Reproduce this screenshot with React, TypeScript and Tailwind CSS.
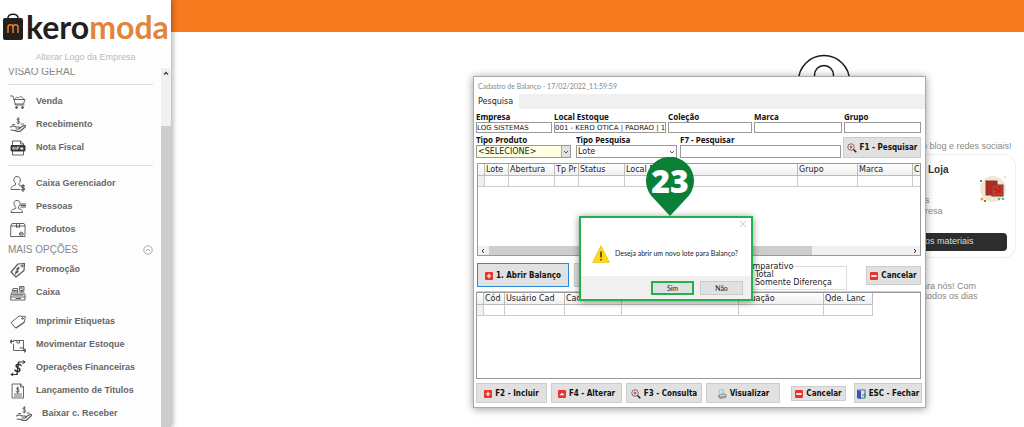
import type { ReactNode } from "react";

function Glyph({ children, className = "h-4 w-4" }: { children: ReactNode; className?: string }) {
  return (
    <svg viewBox="0 0 32 32" className={className} fill="none" stroke="#555" strokeWidth="1.8" strokeLinecap="round" strokeLinejoin="round" aria-hidden="true">
      {children}
    </svg>
  );
}

const hand = (
  <>
    <path d="M19 4c-1.500-1.500-5-1-5 1.200S19 7 19 10s-4 3.500-5.500 1.500M16.500 1v13" />
    <path d="M1 20c4-3 7-3 11 0h6c3 0 3 4 0 4h-6M19 22l9-5c3-1 4 1 2 3l-9 8c-2 1.500-8 1-11-1l-8-1" strokeWidth="2.200" />
    <path d="M5 15h4M22 14h5" />
  </>
);

const icons: Record<string, ReactNode> = {
  cart: (
    <>
      <path d="M1 4h5l5 18h17M8 11h22l-3 9H10" />
      <path d="M10 10l3-4 4 2 3-3 4 1 3 4" strokeWidth="1.500" />
      <circle cx="13" cy="27" r="2" fill="#555" />
      <circle cx="25" cy="27" r="2" fill="#555" />
    </>
  ),
  hand,
  nfe: (
    <>
      <path d="M5 10V2h16l6 6v2M5 23v7h22v-7M21 2v6h6" />
      <rect x="2" y="11" width="28" height="11" rx="1" fill="#333" stroke="#333" />
      <path d="M6 19v-5l4 5v-5M14 19v-5h4M14 16.500h3M21 17h5c0-3-5-3-5 0s3 2.500 5 1.500" stroke="#fff" strokeWidth="1.500" />
    </>
  ),
  manager: (
    <>
      <path d="M11 15C5 9 8 1 14 1s9 8 4 14v3l4 2M11 15v3c-4 2-9 2-9 9h17" />
      <path d="M29 20c-1.500-2-6-1.500-6 1s6 2 6 5-5 3-6.500 1M26 17v14" strokeWidth="2.200" />
    </>
  ),
  people: (
    <>
      <path d="M11 16C6 10 7 3 14 3s8 7 3 13v3c4 2 8 2 8 8H2c0-6 5-6 9-8z" />
      <path d="M22 10h9M22 13h9M22 16h9" strokeWidth="2.200" />
    </>
  ),
  box: (
    <>
      <path d="M2 7l2-4h24l2 4v22H2zM2 8h28M13 3v8l3-2 3 2V3" />
      <path d="M20 22h6v4h-6zM22 20v2" strokeWidth="2" />
    </>
  ),
  promo: (
    <>
      <path d="M29 3l-13 1L2 20l10 10 16-13z" strokeWidth="2.300" />
      <circle cx="24" cy="8" r="2" />
      <path d="M18 13c-3-2-6 1-3 3.500s-1 6-4 3.500M18 10l-7 14" strokeWidth="2.200" />
    </>
  ),
  register: (
    <>
      <path d="M3 18L6 7h9v8M19 10V3h9v7zM24 10v4M3 18h27v12H2zM2 24h28" />
      <path d="M7 11h6M7 14h6M18 14h10M6 20h20M12 27h9M21 6h5" strokeWidth="2.200" />
    </>
  ),
  tag: (
    <>
      <path d="M30 5l-12-1L2 17l9 11 17-12zM11 27l2 1 16-11" />
      <circle cx="25" cy="9" r="1.700" />
    </>
  ),
  move: (
    <>
      <path d="M7 7h20v18M7 14v13h14M14 7v5h5V7" />
      <path d="M0 9h7M3 6L0 9l3 3M23 27h9M29 24l3 3-3 3M20 22h6" strokeWidth="2.300" />
    </>
  ),
  finance: (
    <g stroke="#333">
      <path d="M22 11c-2-4-10-3-10 1s9 3 8 8-9 4-10 0M17 5l-3 22" strokeWidth="3" />
      <path d="M17 4h13M26 1l4 3-4 3M15 29H2M6 26l-4 3 4 3" strokeWidth="2" />
    </g>
  ),
  title: (
    <>
      <path d="M5 2h16l6 6v22H5zM21 2v6h6M9 22h14M9 26h14" />
      <path d="M18 11c-2-2-6-1-5 1s5 1 5 4-4 3-6 1M15.500 8v12" strokeWidth="2" />
    </>
  ),
};

function MenuItem({ icon, label, indent = false }: { icon: string; label: string; indent?: boolean }) {
  return (
    <a href="#" className={`flex h-[23px] items-center gap-2.5 text-[9px] font-bold text-[#666] ${indent ? "pl-4" : "pl-2.5"}`}>
      <Glyph>{icons[icon]}</Glyph>
      {label}
    </a>
  );
}

function Sidebar() {
  return (
    <aside className="z-10 flex w-[171px] shrink-0 flex-col bg-[#fdfdfd] font-['Liberation_Sans',sans-serif] shadow-[2px_0_5px_rgba(0,0,0,0.3)]">
      <div className="flex h-[50px] items-center gap-[3px] bg-white pl-[3px] pt-[3px]">
        <svg viewBox="0 0 20 28" className="h-7 w-5 shrink-0" aria-hidden="true">
          <path d="M5 9V5c0-5 10-5 10 0v4" fill="none" stroke="#231f20" strokeWidth="1.500" />
          <rect y="5" width="20" height="22" rx="2" fill="#231f20" />
          <path d="M5 20v-6c0-3 5-3 5 0v6M10 14c0-3 5-3 5 0v6" fill="none" stroke="#ef7d22" strokeWidth="1.500" />
        </svg>
        <span className="font-['Lato',sans-serif] text-[32px] font-bold leading-[40px] text-[#231f20]">
          kero<span className="text-[#e0853a]">moda</span>
        </span>
      </div>
      <a href="#" className="h-[18px] text-center text-[9px] leading-[15px] text-[#bbb]">Alterar Logo da Empresa</a>
      <div className="flex min-h-0 flex-1 overflow-hidden">
        <nav className="min-w-0 flex-1 overflow-hidden">
          <h2 className="h-4 pl-2 text-[10px] leading-[8px] text-[#888]">VISÃO GERAL</h2>
          <hr className="mx-2 mb-[5px] border-[#ddd]" />
          <MenuItem icon="cart" label="Venda" />
          <MenuItem icon="hand" label="Recebimento" />
          <MenuItem icon="nfe" label="Nota Fiscal" />
          <hr className="mx-2 my-[6px] border-[#ddd]" />
          <MenuItem icon="manager" label="Caixa Gerenciador" />
          <MenuItem icon="people" label="Pessoas" />
          <MenuItem icon="box" label="Produtos" />
          <h2 className="flex h-[17px] items-center justify-between px-2 text-[10px] text-[#888]">
            MAIS OPÇÕES
            <svg viewBox="0 0 10 10" className="h-[10px] w-[10px]" fill="none" stroke="#999" aria-hidden="true">
              <circle cx="5" cy="5" r="4.200" strokeWidth="0.800" />
              <path d="M3 6l2-2 2 2" strokeWidth="0.800" />
            </svg>
          </h2>
          <MenuItem icon="promo" label="Promoção" />
          <MenuItem icon="register" label="Caixa" />
          <div className="mt-[6px]">
            <MenuItem icon="tag" label="Imprimir Etiquetas" />
            <MenuItem icon="move" label="Movimentar Estoque" />
            <MenuItem icon="finance" label="Operações Financeiras" />
            <MenuItem icon="title" label="Lançamento de Titulos" />
            <MenuItem icon="hand" label="Baixar c. Receber" indent />
          </div>
        </nav>
        <div className="flex w-[10px] flex-col bg-[#f1f1f1]">
          <svg viewBox="0 0 10 10" className="h-[10px] w-[10px]" aria-hidden="true">
            <path d="M3 6.500l2-2 2 2" fill="none" stroke="#444" strokeWidth="1.400" />
          </svg>
          <div className="mt-12 flex-1 bg-[#cdcdcd]" />
        </div>
      </div>
    </aside>
  );
}

function Backdrop() {
  return (
    <main className="relative flex min-w-0 flex-1 flex-col font-['Liberation_Sans',sans-serif] text-[9px] text-[#888]">
      <div className="h-8 shrink-0 bg-[#f77a1f]" />
      <div className="flex justify-end pr-[173px] pt-[22px]">
        <svg viewBox="0 0 54 54" className="h-[54px] w-[54px]" fill="none" stroke="#1a1a1a" strokeWidth="1.500" aria-hidden="true">
          <circle cx="27" cy="27" r="25.500" />
          <circle cx="27" cy="21" r="9.500" />
        </svg>
      </div>
      <div className="ml-auto flex w-[102px] flex-col pr-2 pt-[32px]">
        <p className="whitespace-nowrap leading-3">o blog e redes sociais!</p>
        <section className="mt-[2px] flex h-[104px] flex-col rounded-r-xl border border-l-0 border-[#eee] pr-2 pt-2">
          <div className="flex h-[50px] justify-between pl-[3px]">
            <div>
              <h3 className="pl-[3px] text-[10px] font-bold leading-[14px] text-[#333]">Loja</h3>
              <p className="mt-[18px] leading-[11px]">s<br />resa</p>
            </div>
            <svg viewBox="0 0 28 28" className="mt-3 h-7 w-7" aria-hidden="true">
              <circle cx="14" cy="14" r="13" fill="#f5e4cf" />
              <rect x="7" y="6" width="11" height="14" fill="#b92820" stroke="#68443a" />
              <rect x="13" y="10" width="11" height="11" fill="#d8322b" stroke="#68443a" />
              <path d="M16 12v3h3v3M16 18h2M21 12v6M18 12h2" stroke="#8e211c" fill="none" />
              <circle cx="2" cy="6" r="1" fill="#555" />
              <circle cx="3" cy="24" r="1.500" fill="#f7a21f" />
              <circle cx="6" cy="26" r="1" fill="#354f87" />
              <circle cx="20" cy="24" r="1.200" fill="#4bb5a6" />
              <circle cx="24" cy="24" r="1.200" fill="#4bb5a6" />
              <circle cx="26" cy="2" r="1.500" fill="#f5e4cf" />
            </svg>
          </div>
          <button className="mt-5 h-[18px] whitespace-nowrap rounded-r bg-[#2d2d2d] pl-[3px] text-left text-[9px] text-[#ddd]">os materiais</button>
        </section>
        <p className="mt-[23px] whitespace-nowrap leading-[10px]">ara nós! Com<br />&nbsp;todos os dias</p>
      </div>
    </main>
  );
}

function RedIcon({ kind }: { kind: "plus" | "up" | "minus" }) {
  return (
    <svg viewBox="0 0 9 9" className="h-2 w-2 shrink-0" aria-hidden="true">
      <rect width="9" height="9" rx="1" fill="#e8342c" />
      {kind === "plus" && <path d="M4.500 2v5M2 4.500h5" stroke="#fff" strokeWidth="1.300" />}
      {kind === "minus" && <path d="M1.500 4.500h6" stroke="#fff" strokeWidth="2" />}
      {kind === "up" && <path d="M1.500 6h6L4.500 3z" fill="#fff" />}
    </svg>
  );
}

function Magnifier() {
  return (
    <svg viewBox="0 0 10 10" className="h-[10px] w-[10px] shrink-0" fill="none" aria-hidden="true">
      <circle cx="4" cy="4" r="3.200" stroke="#555" fill="#fff" strokeWidth="0.900" />
      <path d="M4 2.300v3.400M2.300 4h3.400" stroke="#e22" strokeWidth="1.200" />
      <path d="M6.500 6.500L9.300 9.300" stroke="#222" strokeWidth="1.500" />
    </svg>
  );
}

function Printer() {
  return (
    <svg viewBox="0 0 10 10" className="h-[10px] w-[10px] shrink-0" aria-hidden="true">
      <path d="M2 1l4-1 1 5-4 1z" fill="#c4e1f3" stroke="#8ba5b5" strokeWidth="0.500" />
      <path d="M1 6l6-2 3 2-1 3-6 1-2-2z" fill="#999" />
      <path d="M3 7l5-1" stroke="#e7e7e7" />
    </svg>
  );
}

function Door() {
  return (
    <svg viewBox="0 0 9 10" className="h-[10px] w-[9px] shrink-0" aria-hidden="true">
      <rect x="1" y="1" width="7" height="8" fill="#d7e2f5" stroke="#5066b8" />
      <path d="M0 1l4 1v8L0 9z" fill="#4050b8" />
      <path d="M5 6h3M7 4l2 2-2 2" stroke="#27a33a" fill="none" />
    </svg>
  );
}

function PushButton({ icon, children, className }: { icon: ReactNode; children: ReactNode; className: string }) {
  return (
    <button className={`flex shrink-0 items-center justify-center gap-[3px] whitespace-nowrap border bg-[#e1e1e1] pt-px font-['DejaVu_Sans_Condensed','DejaVu_Sans',sans-serif] text-[8px] font-bold text-[#111] ${className}`}>
      {icon}
      {children}
    </button>
  );
}

const labelClass = "block font-['Noto_Sans',sans-serif] text-[8px] font-bold leading-[10px] text-[#111] whitespace-nowrap";
const boxClass = "block w-full rounded-none border border-[#999] font-['DejaVu_Sans',sans-serif] text-[#222] outline-none";

function Field({ id, label, value = "" }: { id: string; label: string; value?: string }) {
  return (
    <div className="min-w-0">
      <label htmlFor={id} className={labelClass}>{label}</label>
      <input id={id} defaultValue={value} className={`${boxClass} h-[11px] bg-white text-[7px]`} />
    </div>
  );
}

function Picker({ id, label, value, tinted = false, className }: { id: string; label: string; value: string; tinted?: boolean; className: string }) {
  return (
    <div className={className}>
      <label htmlFor={id} className={labelClass}>{label}</label>
      <div className="relative">
        <select id={id} className={`${boxClass} h-[13px] appearance-none px-px text-[8px] leading-[11px] ${tinted ? "bg-[#ffffe1]" : "bg-white"}`}>
          <option>{value}</option>
        </select>
        <span className={`pointer-events-none absolute bottom-px right-px top-px flex w-[9px] items-center justify-center ${tinted ? "border-l border-[#aaa] bg-[#e1e1e1]" : ""}`}>
          <svg viewBox="0 0 6 4" className="h-1 w-1.5" fill="none" stroke="#555" aria-hidden="true"><path d="M1 1l2 2 2-2" /></svg>
        </span>
      </div>
    </div>
  );
}

type Column = { title: string; width: number };

function DataGrid({ columns }: { columns: Column[] }) {
  return (
    <table className="table-fixed border-separate border-spacing-0 font-['DejaVu_Sans',sans-serif] text-[8px] text-[#222]" style={{ width: columns.reduce((sum, c) => sum + c.width, 0) }}>
      <colgroup>
        {columns.map((c, i) => <col key={i} style={{ width: c.width }} />)}
      </colgroup>
      <thead>
        <tr className="h-3 bg-linear-to-b from-white to-[#eee]">
          {columns.map((c, i) => (
            <th key={i} className="overflow-hidden whitespace-nowrap border-b border-r border-[#bbb] p-0 pl-px text-left font-normal leading-[11px]">{c.title}</th>
          ))}
        </tr>
      </thead>
      <tbody>
        <tr className="h-[11px]">
          {columns.map((c, i) => (
            <td key={i} className={`border-b border-r border-[#ccc] p-0 ${i === 0 ? "bg-[#f0f0f0]" : ""}`} />
          ))}
        </tr>
      </tbody>
    </table>
  );
}

const lots: Column[] = [
  { title: "", width: 7 },
  { title: "Lote", width: 24 },
  { title: "Abertura", width: 46 },
  { title: "Tp Pr", width: 24 },
  { title: "Status", width: 46 },
  { title: "Local Estoque", width: 173 },
  { title: "Grupo", width: 60 },
  { title: "Marca", width: 55 },
  { title: "Co", width: 20 },
];

const entries: Column[] = [
  { title: "", width: 7 },
  { title: "Cód", width: 21 },
  { title: "Usuário Cad", width: 60 },
  { title: "Cadastro", width: 57 },
  { title: "Produto", width: 117 },
  { title: "Situação", width: 85 },
  { title: "Qde. Lanc", width: 49 },
];

function StockWindow() {
  return (
    <div role="dialog" aria-label="Cadastro de Balanço" className="absolute left-[473px] top-[76px] z-20 w-[453px] border border-[#aaa] bg-white pb-1 shadow-[0_1px_8px_rgba(0,0,0,0.4)]">
      <div className="h-[17px] pl-1 font-['Lato',sans-serif] text-[7px] leading-[18px] text-[#888]">Cadastro de Balanço - 17/02/2022_11:59:59</div>
      <div className="flex h-[15px] bg-[#f0f0f0]">
        <button className="bg-white pl-1 pr-1.5 pt-px font-['DejaVu_Sans',sans-serif] text-[8px] text-[#222]">Pesquisa</button>
      </div>
      <div className="pl-[2px] pr-1 pt-[3px]">
        <div className="grid grid-cols-[76px_112px_84px_88px_1fr] gap-[2px]">
          <Field id="empresa" label="Empresa" value="LOG SISTEMAS" />
          <Field id="local" label="Local Estoque" value="001 - KERO OTICA | PADRAO | 1" />
          <Field id="colecao" label="Coleção" />
          <Field id="marca" label="Marca" />
          <Field id="grupo" label="Grupo" />
        </div>
        <div className="mt-[2px] flex items-end">
          <Picker id="produto" label="Tipo Produto" value="<SELECIONE>" tinted className="mr-[5px] w-[95px]" />
          <Picker id="pesquisa" label="Tipo Pesquisa" value="Lote" className="mr-[3px] w-[101px]" />
          <div className="mr-[2px] flex-1">
            <label htmlFor="f7" className={labelClass}>F7 - Pesquisar</label>
            <input id="f7" className={`${boxClass} h-[13px] bg-white px-px text-[8px]`} />
          </div>
          <PushButton icon={<Magnifier />} className="h-[21px] w-[78px] border-[#ccc]">F1 - Pesquisar</PushButton>
        </div>
      </div>
      <div className="ml-[3px] mr-1 mt-[5px] flex h-[93px] flex-col justify-between overflow-hidden border border-[#999] bg-white">
        <DataGrid columns={lots} />
        <div className="flex h-[9px] items-center justify-between bg-[#f0f0f0] px-[3px]">
          <svg viewBox="0 0 4 6" className="h-1.5 w-1" fill="none" stroke="#333" aria-hidden="true"><path d="M3 1L1 3l2 2" /></svg>
          <div className="ml-1 mr-auto h-full w-[323px] bg-[#cdcdcd]" />
          <svg viewBox="0 0 4 6" className="h-1.5 w-1" fill="none" stroke="#333" aria-hidden="true"><path d="M1 1l2 2-2 2" /></svg>
        </div>
      </div>
      <div className="ml-[3px] mr-1 flex h-[36px] items-center border-b border-[#ccc] pt-[3px]">
        <PushButton icon={<RedIcon kind="plus" />} className="h-6 w-[92px] border-[#2b88d8]">1. Abrir Balanço</PushButton>
        <PushButton icon={<RedIcon kind="minus" />} className="ml-[5px] h-6 w-[92px] border-[#ccc]">2. Fechar</PushButton>
        <fieldset className="ml-auto mr-[19px] mt-[2px] h-[27px] w-[107px] border border-[#ddd] font-['DejaVu_Sans',sans-serif] text-[8px] leading-[8px] text-[#222]">
          <legend className="ml-px leading-[8px]">Comparativo</legend>
          <label className="flex items-center gap-1 whitespace-nowrap pl-[2px]"><input type="radio" name="cmp" className="h-2 w-2" />Total</label>
          <label className="flex items-center gap-1 whitespace-nowrap pl-[2px]"><input type="radio" name="cmp" className="h-2 w-2" />Somente Diferença</label>
        </fieldset>
        <PushButton icon={<RedIcon kind="minus" />} className="h-[19px] w-[55px] border-[#ccc]">Cancelar</PushButton>
      </div>
      <div className="ml-[2px] mr-1 h-[87px] overflow-hidden border border-[#999]">
        <DataGrid columns={entries} />
      </div>
      <div className="ml-[2px] mr-[3px] mt-1 flex items-center">
        <PushButton icon={<RedIcon kind="plus" />} className="mr-1 h-5 w-[71px] border-[#ccc]">F2 - Incluir</PushButton>
        <PushButton icon={<RedIcon kind="up" />} className="mr-1 h-5 w-[71px] border-[#ccc]">F4 - Alterar</PushButton>
        <PushButton icon={<Magnifier />} className="mr-1 h-5 w-[76px] border-[#ccc]">F3 - Consulta</PushButton>
        <PushButton icon={<Printer />} className="h-5 w-[74px] border-[#ccc]">Visualizar</PushButton>
        <PushButton icon={<RedIcon kind="minus" />} className="ml-auto mr-2 h-[15px] w-[55px] border-[#ccc]">Cancelar</PushButton>
        <PushButton icon={<Door />} className="h-5 w-[68px] border-[#ccc]">ESC - Fechar</PushButton>
      </div>
    </div>
  );
}

function Confirm() {
  return (
    <div role="alertdialog" aria-label="Confirmação" className="absolute left-[579px] top-[216px] z-30 flex h-[85px] w-[174px] flex-col border-2 border-[#22b14c] bg-white font-['Lato',sans-serif] text-[7px] text-[#222] shadow-[0_1px_7px_rgba(0,0,0,0.45)]">
      <button aria-label="Fechar" className="mr-[5px] mt-[3px] self-end">
        <svg viewBox="0 0 6 6" className="h-1.5 w-1.5" stroke="#bbb" strokeWidth="0.800" aria-hidden="true"><path d="M0 0l6 6M6 0L0 6" /></svg>
      </button>
      <div className="flex flex-1 items-center gap-[5px] pl-[11px] pt-1">
        <svg viewBox="0 0 18 18" className="h-[18px] w-[18px] shrink-0" aria-hidden="true">
          <path d="M9 .5L17.500 17.500H.5z" fill="#ffd90f" stroke="#e6bd18" strokeWidth="0.600" />
          <path d="M9 6.500v6M9 14v1.500" stroke="#333" strokeWidth="1.500" />
        </svg>
        <p className="whitespace-nowrap">Deseja abrir um novo lote para Balanço?</p>
      </div>
      <div className="flex h-[23px] shrink-0 items-center justify-end gap-1.5 bg-[#f0f0f0] pr-2">
        <button className="h-[14px] w-[43px] border-2 border-[#22b14c] bg-[#e1e1e1] leading-[10px]">Sim</button>
        <button className="h-[14px] w-[43px] border border-[#ccc] bg-[#e1e1e1] leading-[10px]">Não</button>
      </div>
    </div>
  );
}

function StepPin() {
  return (
    <div className="absolute left-[645px] top-[157px] z-40 h-[60px] w-[50px]">
      <svg viewBox="0 0 50 60" className="absolute inset-0 h-full w-full" aria-hidden="true">
        <path d="M25 59L6 38.500A24 24 0 1 1 44 38.500z" fill="#0a8036" />
      </svg>
      <span className="relative block text-center font-['Open_Sans',sans-serif] text-[32px] font-extrabold leading-[48px] text-white">23</span>
    </div>
  );
}

export default function App() {
  return (
    <div className="relative flex h-screen overflow-hidden bg-white">
      <Sidebar />
      <Backdrop />
      <StockWindow />
      <StepPin />
      <Confirm />
    </div>
  );
}
